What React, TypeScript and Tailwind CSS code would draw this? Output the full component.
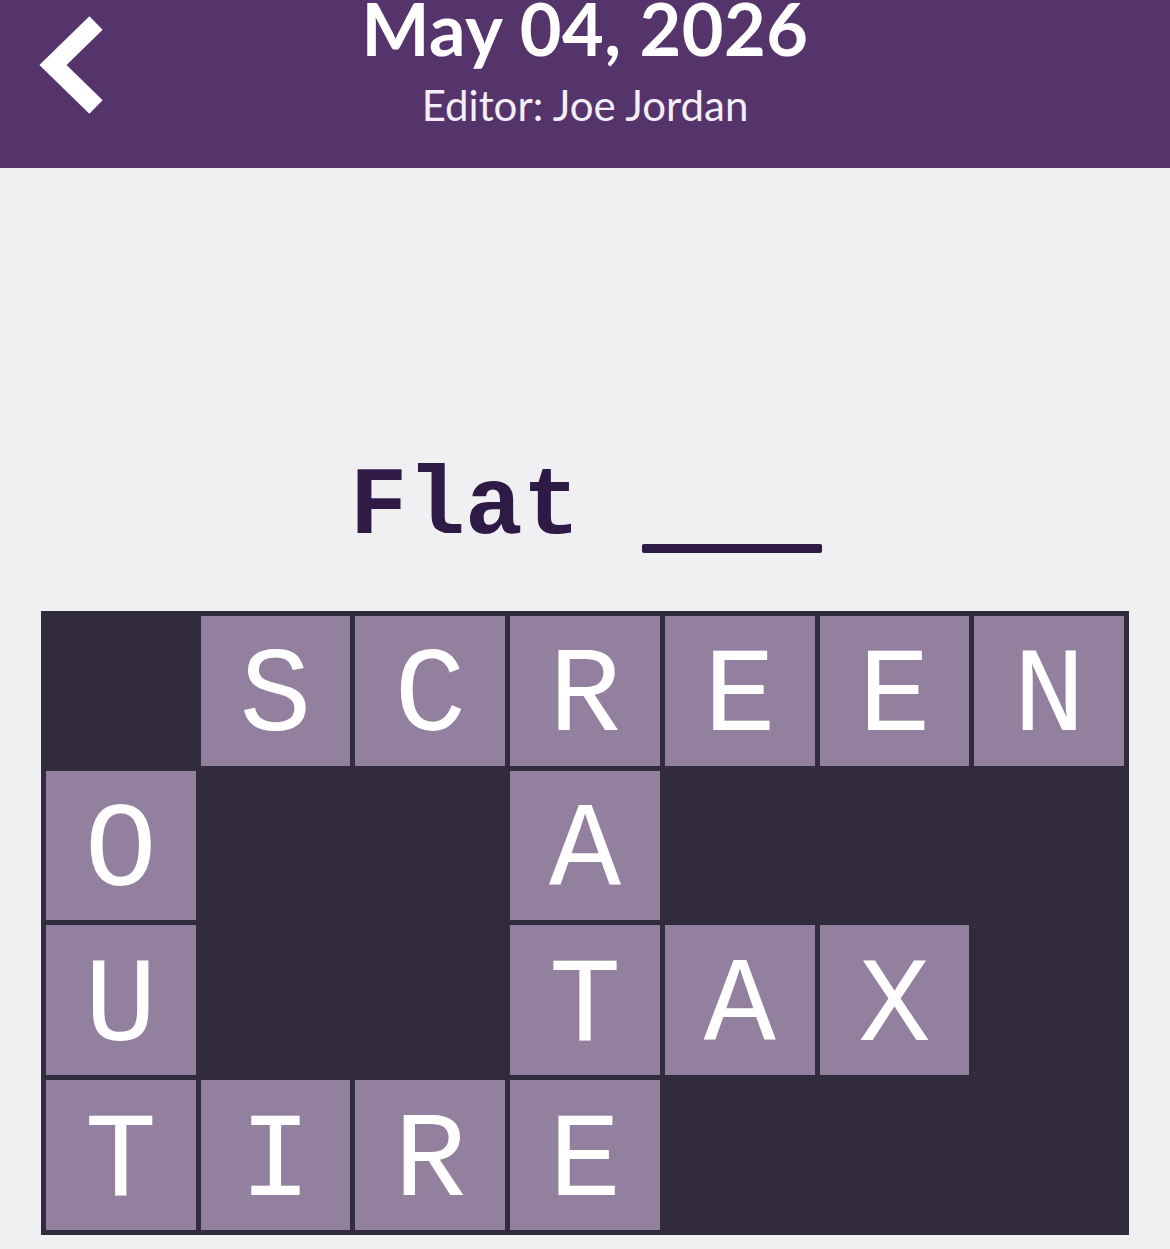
import React from "react";

const ROWS: string[][] = [
  ["", "S", "C", "R", "E", "E", "N"],
  ["O", "", "", "A", "", "", ""],
  ["U", "", "", "T", "A", "X", ""],
  ["T", "I", "R", "E", "", "", ""],
];

function BackChevron() {
  return (
    <svg width="76" height="110" viewBox="0 0 76 110" fill="none">
      <path d="M62 13 L19 55 L62 97" stroke="white" strokeWidth="19" strokeLinejoin="miter" strokeLinecap="butt" />
    </svg>
  );
}

function Tile({ letter }: { letter: string }) {
  if (!letter) return <div className="aspect-square" />;
  return (
    <div className="aspect-square bg-[#93809f] flex items-center justify-center">
      <span className="text-white text-[120px] leading-none pt-[15px] font-['Liberation_Mono',monospace]">{letter}</span>
    </div>
  );
}

export default function App() {
  return (
    <div className="min-h-screen bg-[#f0f0f2] font-['Lato',sans-serif]">
      <header className="h-[168px] bg-[#55346c] grid grid-cols-[1fr_auto_1fr] overflow-hidden">
        <div className="pl-[34px] pt-[10px]">
          <BackChevron />
        </div>
        <div className="flex flex-col items-center text-white">
          <h1 className="text-[72px] leading-[56px] font-bold tracking-[0.5px]">May 04, 2026</h1>
          <p className="text-[42px] leading-none mt-[28px] text-[#f3eef7]">Editor: Joe Jordan</p>
        </div>
        <div />
      </header>

      <div className="mt-[292px] flex justify-center items-start pl-[2px]">
        <span className="text-[96px] leading-none font-bold text-[#2e1a45] font-['Liberation_Mono',monospace]">Flat</span>
        <span className="ml-[62px] mt-[84px] w-[180px] h-[9px] rounded-[2px] bg-[#2e1a45]" />
      </div>

      <div className="mx-[41px] mt-[55px] w-[1088px] bg-[#322a3d] p-[5px] grid grid-cols-7 gap-[5px]">
        {ROWS.flatMap((row, r) => row.map((l, c) => <Tile key={`${r}-${c}`} letter={l} />))}
      </div>
    </div>
  );
}
